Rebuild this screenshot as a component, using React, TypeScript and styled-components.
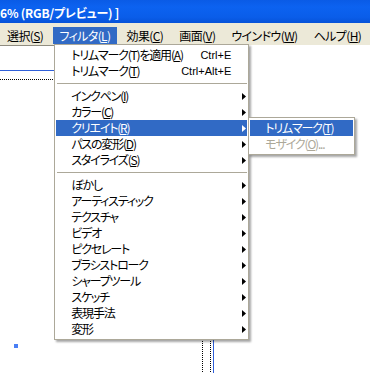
import styled, { createGlobalStyle } from "styled-components";

const GlobalStyle = createGlobalStyle`
  html, body {
    margin: 0;
    padding: 0;
    background: #fff;
  }
  body {
    font-family: "Noto Sans CJK JP", "Noto Sans", sans-serif;
    font-size: 12px;
    font-feature-settings: "palt";
    color: #000;
  }
`;

type Entry =
  | {
      kind: "item";
      label: string;
      shortcut?: string;
      sub?: boolean;
      active?: boolean;
      disabled?: boolean;
    }
  | { kind: "sep" };

const menuBar = ["選択(&S)", "フィルタ(&L)", "効果(&C)", "画面(&V)", "ウインドウ(&W)", "ヘルプ(&H)"];

const filterMenu: Entry[] = [
  { kind: "item", label: "トリムマーク(T)を適用(&A)", shortcut: "Ctrl+E" },
  { kind: "item", label: "トリムマーク(&T)", shortcut: "Ctrl+Alt+E" },
  { kind: "sep" },
  { kind: "item", label: "インクペン(&I)", sub: true },
  { kind: "item", label: "カラー(&C)", sub: true },
  { kind: "item", label: "クリエイト(&R)", sub: true, active: true },
  { kind: "item", label: "パスの変形(&D)", sub: true },
  { kind: "item", label: "スタイライズ(&S)", sub: true },
  { kind: "sep" },
  ...[
    "ぼかし",
    "アーティスティック",
    "テクスチャ",
    "ビデオ",
    "ピクセレート",
    "ブラシストローク",
    "シャープツール",
    "スケッチ",
    "表現手法",
    "変形",
  ].map((label): Entry => ({ kind: "item", label, sub: true })),
];

const createMenu: Entry[] = [
  { kind: "item", label: "トリムマーク(&T)", active: true },
  { kind: "item", label: "モザイク(&O)...", disabled: true },
];

// "&X" marks the access key, drawn underlined
function Label({ text }: { text: string }) {
  const i = text.indexOf("&");
  if (i < 0) return <>{text}</>;
  return (
    <>
      {text.slice(0, i)}
      <u>{text[i + 1]}</u>
      {text.slice(i + 2)}
    </>
  );
}

function Arrow({ light }: { light?: boolean }) {
  return (
    <ArrowIcon width="4" height="7" viewBox="0 0 4 7">
      <polygon points="0,0 4,3.5 0,7" fill={light ? "#fff" : "#000"} />
    </ArrowIcon>
  );
}

// page edge, margins and a selection handle on the artboard
function Artboard() {
  return (
    <Canvas shapeRendering="crispEdges">
      <rect x="0" y="0" width="240" height="1" fill="#8f8c80" />
      <rect x="0" y="25" width="214" height="1" fill="#2f5fd8" />
      <rect x="213" y="25" width="1" height="400" fill="#2f5fd8" />
      <line x1="0" y1="34.5" x2="211" y2="34.5" stroke="#000" strokeDasharray="1 1" />
      <line x1="202.5" y1="34" x2="202.5" y2="400" stroke="#000" strokeDasharray="1 1" />
      <line x1="210.5" y1="34" x2="210.5" y2="400" stroke="#000" strokeDasharray="1 1" />
      <rect x="14" y="299" width="4" height="4" fill="#4a7ff5" />
    </Canvas>
  );
}

export default function App() {
  return (
    <Window>
      <GlobalStyle />
      <TitleBar>6% (RGB/プレビュー) ]</TitleBar>
      <MenuBar>
        {menuBar.map((m) => {
          const open = m.startsWith("フィルタ");
          return (
            <BarItem key={m} open={open}>
              <Label text={m} />
              {open && (
                <Dropdown>
                  {filterMenu.map((e, idx) =>
                    e.kind === "sep" ? (
                      <Separator key={idx} />
                    ) : (
                      <MenuRow key={idx} active={e.active}>
                        <RowLabel>
                          <Label text={e.label} />
                        </RowLabel>
                        {e.shortcut && <Shortcut>{e.shortcut}</Shortcut>}
                        {e.sub && <Arrow light={e.active} />}
                        {e.active && (
                          <Submenu>
                            {createMenu.map((s, j) =>
                              s.kind === "item" ? (
                                <SubRow key={j} active={s.active} disabled={s.disabled}>
                                  <Label text={s.label} />
                                </SubRow>
                              ) : null
                            )}
                          </Submenu>
                        )}
                      </MenuRow>
                    )
                  )}
                </Dropdown>
              )}
            </BarItem>
          );
        })}
      </MenuBar>
      <Workspace>
        <Artboard />
      </Workspace>
    </Window>
  );
}

const Window = styled.div`
  display: flex;
  flex-direction: column;
  height: 100vh;
  overflow: hidden;
`;

const TitleBar = styled.div`
  height: 23px;
  flex-shrink: 0;
  display: flex;
  align-items: center;
  padding-top: 1px;
  box-sizing: border-box;
  background: linear-gradient(
    to bottom,
    #0a5be6 0%,
    #0c62f0 30%,
    #0a5de9 75%,
    #0652d8 100%
  );
  color: #fff;
  font-weight: bold;
  font-size: 12px;
  letter-spacing: -0.2px;
  white-space: nowrap;
`;

const MenuBar = styled.div`
  height: 22px;
  flex-shrink: 0;
  box-sizing: border-box;
  display: flex;
  align-items: flex-end;
  gap: 4px;
  padding: 4px 0 1px 1px;
  background: #ece9d8;
`;

const BarItem = styled.div<{ open?: boolean }>`
  position: relative;
  height: 17px;
  line-height: 17px;
  padding: 0 6px;
  white-space: nowrap;
  letter-spacing: -0.6px;
  background: ${(p) => (p.open ? "#316ac5" : "transparent")};
  color: ${(p) => (p.open ? "#fff" : "#000")};
`;

const Dropdown = styled.div`
  position: absolute;
  top: 100%;
  left: 1px;
  z-index: 10;
  width: 195px;
  box-sizing: border-box;
  padding: 2px 1px;
  background: #fff;
  border: 1px solid #aca899;
  box-shadow: 2px 2px 2px rgba(0, 0, 0, 0.35);
  color: #000;
  letter-spacing: -1.2px;
`;

const MenuRow = styled.div<{ active?: boolean }>`
  position: relative;
  height: 16px;
  display: flex;
  align-items: center;
  padding: 0 1px 0 15px;
  line-height: 16px;
  background: ${(p) => (p.active ? "#316ac5" : "transparent")};
  color: ${(p) => (p.active ? "#fff" : "#000")};
`;

const RowLabel = styled.span`
  flex: 1;
  white-space: nowrap;
`;

const Shortcut = styled.span`
  margin-right: 15px;
  font-family: "Liberation Sans", sans-serif;
  font-size: 11px;
  letter-spacing: 0;
`;

const ArrowIcon = styled.svg`
  display: block;
  flex-shrink: 0;
`;

const Separator = styled.div`
  height: 9px;
  display: flex;
  align-items: center;
  &::after {
    content: "";
    flex: 1;
    height: 1px;
    margin-left: 1px;
    background: #aca899;
  }
`;

const Submenu = styled.div`
  position: absolute;
  left: calc(100% + 1px);
  top: -3px;
  width: 107px;
  box-sizing: border-box;
  padding: 2px 1px;
  background: #fff;
  border: 1px solid #aca899;
  box-shadow: 2px 2px 2px rgba(0, 0, 0, 0.35);
`;

const SubRow = styled.div<{ active?: boolean; disabled?: boolean }>`
  height: 16px;
  line-height: 16px;
  padding-left: 15px;
  white-space: nowrap;
  background: ${(p) => (p.active ? "#316ac5" : "transparent")};
  color: ${(p) => (p.active ? "#fff" : p.disabled ? "#aca899" : "#000")};
`;

const Workspace = styled.div`
  flex: 1;
  display: flex;
  background: #fff;
`;

const Canvas = styled.svg`
  flex: 1;
  display: block;
`;
